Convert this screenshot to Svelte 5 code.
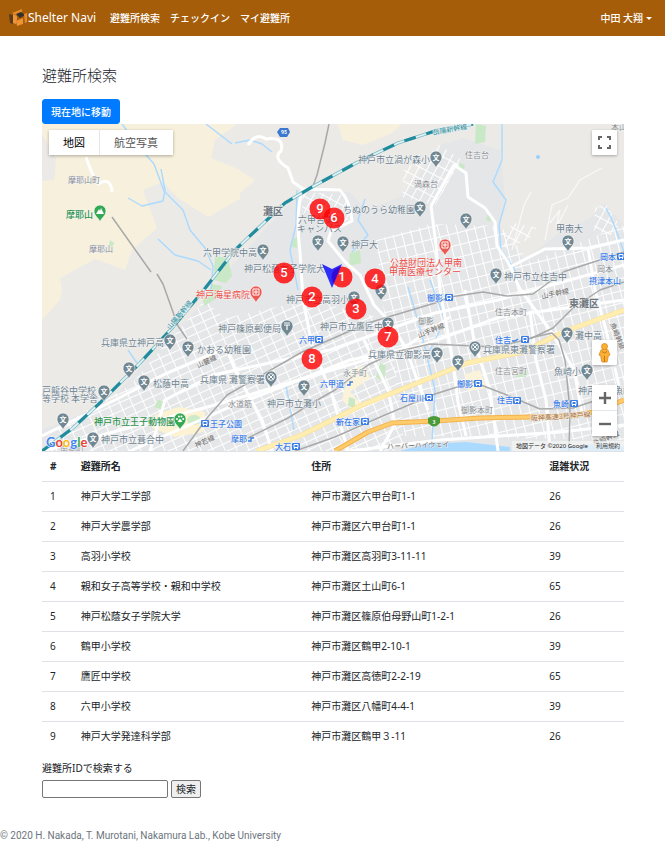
<script>
  const shelters = [
    { id: 1, name: '神戸大学工学部', address: '神戸市灘区六甲台町1-1', crowd: 26 },
    { id: 2, name: '神戸大学農学部', address: '神戸市灘区六甲台町1-1', crowd: 26 },
    { id: 3, name: '高羽小学校', address: '神戸市灘区高羽町3-11-11', crowd: 39 },
    { id: 4, name: '親和女子高等学校・親和中学校', address: '神戸市灘区土山町6-1', crowd: 65 },
    { id: 5, name: '神戸松蔭女子学院大学', address: '神戸市灘区篠原伯母野山町1-2-1', crowd: 26 },
    { id: 6, name: '鶴甲小学校', address: '神戸市灘区鶴甲2-10-1', crowd: 39 },
    { id: 7, name: '鷹匠中学校', address: '神戸市灘区高徳町2-2-19', crowd: 65 },
    { id: 8, name: '六甲小学校', address: '神戸市灘区八幡町4-4-1', crowd: 39 },
    { id: 9, name: '神戸大学発達科学部', address: '神戸市灘区鶴甲３-11', crowd: 26 }
  ];

  // [x, y, number] of each shelter on the map canvas
  const markers = [
    [342, 277, 1], [312, 297, 2], [356, 309, 3], [375, 279, 4], [284, 273, 5],
    [388, 337, 7], [312, 359, 8], [320, 209, 9], [334, 218, 6]
  ];

  const pins = [
    [170, 341], [188, 348], [129, 369], [144, 382], [104, 392], [63, 420], [93, 439],
    [263, 251], [318, 242], [343, 243], [420, 208], [436, 158], [381, 291], [354, 298],
    [388, 324], [304, 387], [466, 220], [568, 242], [496, 275], [437, 354], [458, 362],
    [567, 334], [587, 371]
  ];
  const special = [
    [100, 212, 'green', 'peak'], [180, 420, 'green', 'paw'], [256, 293, 'red', 'cross'],
    [445, 246, 'red', 'cross'], [287, 327, 'slate', 'post'], [271, 378, 'slate', 'police'],
    [475, 348, 'slate', 'police']
  ];

  // [x, baseline, text, class]
  const labels = [
    [68, 183, '摩耶山町', 'area'], [89, 252, '摩耶山', 'area'], [66, 218, '摩耶山', 'park'],
    [203, 256, '六甲学院中高', 'poi'], [263, 215, '灘区', 'ward'], [569, 307, '東灘区', 'ward'],
    [358, 163, '神戸市立渦が森小', 'poi'], [343, 213, 'ちぬのうら幼稚園', 'poi'],
    [298, 223, '六甲台第2', 'poi'], [297, 232, 'キャンパス', 'poi'], [351, 248, '神戸大', 'poi'],
    [244, 272, '神戸松蔭女子学院大', 'poi'], [414, 187, '渦森台', 'area'], [465, 158, '住吉台', 'area'],
    [611, 130, '本山', 'area'], [556, 232, '甲南大', 'poi'], [504, 280, '神戸市立住吉中', 'poi'],
    [390, 266, '公益財団法人甲南', 'medical'], [389, 275, '甲南医療センター', 'medical'],
    [196, 298, '神戸海星病院', 'medical'], [600, 260, '岡本', 'station'], [597, 272, '岡本', 'area'],
    [589, 284, '摂津本山', 'station'], [101, 346, '兵庫県立神戸高', 'poi'],
    [197, 353, 'かおる幼稚園', 'poi'], [218, 332, '神戸篠原郵便局', 'poi'],
    [286, 303, '神戸市立高羽小', 'poi'], [320, 330, '神戸市立鷹匠中', 'poi'],
    [368, 358, '兵庫県立御影高', 'poi'], [299, 343, '六甲', 'station'], [320, 387, '六甲道', 'station'],
    [343, 376, '永手町', 'area'], [153, 387, '松蔭中高', 'poi'], [200, 383, '兵庫県 灘警察署', 'poi'],
    [42, 394, '戸龍谷中学校', 'poi'], [42, 402, '等学校 本学舎', 'poi'], [94, 425, '神戸市立王子動物園', 'park'],
    [101, 443, '神戸市立葺合中', 'poi'], [210, 427, '王子公園', 'station'], [228, 407, '水道筋', 'area'],
    [267, 407, '神戸市立灘小', 'poi'], [231, 442, '摩耶', 'station'], [275, 450, '大石', 'station'],
    [336, 425, '新在家', 'station'], [400, 401, '石屋川', 'station'], [427, 301, '御影', 'station'],
    [418, 324, '御影', 'area'], [495, 315, '住吉本町', 'area'], [495, 343, '住吉', 'station'],
    [483, 353, '兵庫県東灘警察署', 'poi'], [495, 374, '住吉宮町', 'area'], [457, 387, '御影', 'station'],
    [497, 403, '住吉', 'station'], [461, 413, '御影本町', 'area'], [553, 407, '魚崎', 'station'],
    [554, 375, '魚崎小', 'poi'], [575, 339, '灘中高', 'poi'], [578, 394, '神戸市立魚崎', 'poi'],
    [60, 451, '南本町', 'area']
  ];

  const slanted = [
    [170, 330, -50, '山陽新幹線', 'express'], [433, 135, -10, '山陽新幹線', 'express'],
    [198, 368, -24, '山麓線', 'road'], [542, 299, -12, '山手幹線', 'road'],
    [419, 338, -22, '山手幹線', 'road'], [196, 448, -24, '神若線', 'road'],
    [531, 421, -4, '阪神高速3号神戸線', 'toll'], [387, 449, -2, 'ハーバーハイウェイ', 'road'],
    [610, 324, 68, '魚崎幹線', 'road'], [594, 446, -22, '魚崎幹線', 'road']
  ];

  const stops = [
    [315, 336], [445, 294], [617, 253], [361, 418], [425, 394], [292, 443],
    [521, 336], [474, 380], [513, 397], [570, 400], [201, 420]
  ];

  const rails = [
    'M112 217L151 272M157 274L163 284L178 326L187 339',
    'M329 124L325 143L317 175L313 186',
    'M183 451L207 418L227 395L302 352L368 323L435 303L450 297L483 292L507 296L533 294L563 272L624 252',
    'M248 438L288 418L312 403L335 390L368 365L395 352L430 344L497 347L532 338L553 328L573 308L600 290L624 282',
    'M530 338L552 333L559 340L565 360L568 390L570 410L569 451',
    'M183 451M295 451L335 437L385 415L435 394L473 382L507 395L540 409L573 408L600 399'
  ];

  const roads = [
    'M248 145Q256 132 266 139Q285 136 281 151Q272 158 288 168L293 182L303 189L340 190Q350 200 352 221L331 231L328 241L346 263L360 275L374 305L388 320L405 346L428 410',
    'M303 189Q295 210 300 252L303 300L312 345L332 395L348 451',
    'M42 436L115 400L165 374L226 348L236 372L262 420L272 451',
    'M150 451L165 400L213 375L330 350L435 313L498 300L624 265',
    'M130 451L230 407L350 360L420 346L500 317L624 300',
    'M431 206L454 165L466 173L468 197L485 208L495 222L497 246L508 262L520 289L552 333L574 370L582 413',
    'M431 206L436 245L440 290L451 350L458 402L466 436',
    'M42 451L222 403L402 349L450 317',
    'M380 451L395 424L388 390L364 340',
    'M465 290L474 340L490 390L498 451',
    'M510 267L545 249L588 248L624 240',
    'M588 248L595 290L606 330L620 390',
    'M350 451L440 440L560 432L624 425',
    'M530 311L536 360L546 400L550 451',
    'M86 157Q92 175 98 184Q111 176 112 192'
  ];

  const streams = [
    'M122 124L140 148L154 164L164 191L183 210L190 230L205 248L213 266L211 290',
    'M128 198L142 206L163 201M163 201L165 190L161 169',
    'M158 239L175 255L198 261L211 270',
    'M235 143L250 140L262 144L272 152',
    'M502 124L502 160L493 182L506 200L499 225L501 250L514 268L520 290',
    'M624 252L613 222L606 208M206 124L232 144',
    'M365 199L358 220L368 235L352 252',
    'M297 190L296 225L290 250L298 290',
    'M128 350L137 363M430 280L445 320L430 350',
    'M408 287L422 335L435 390L432 442M286 385L294 430'
  ];

  const greens = [
    '215,256 228,258 232,276 226,283 213,280', '350,253 360,250 361,263 349,266',
    '212,284 222,286 219,297 204,306 203,300', '476,124 486,126 485,142 475,144',
    '380,363 386,366 384,382 376,377', '292,240 298,236 297,248 290,246',
    '158,400 166,402 162,410 154,407', '349,397 355,399 355,408 348,406',
    '521,370 528,371 526,377 515,377', '460,163 465,165 463,172 458,168',
    '488,214 492,216 490,222 486,220', '110,240 114,243 112,248 109,245'
  ];

  let shelterId = $state('');
  let mapType = $state('map');
</script>

<header class="navbar">
  <a class="brand" href="/">
    <svg width="19" height="18" viewBox="0 0 19 18" aria-hidden="true">
      <path d="M0 5L4 6V15L1 14Z" fill="#5a3c1c" />
      <path d="M3 4L13 0V3L7 6Z" fill="#e58a2c" />
      <path d="M4 5L8 7V10L7 15L4 14Z" fill="#ee9336" />
      <path d="M7 5L12 3L16 6L11 9Z" fill="#33302c" />
      <path d="M7 12L14 9V15L8 17Z" fill="#ee9336" />
      <path d="M15 5L18 4V13L16 14Z" fill="#e58a2c" />
    </svg>
    <span>Shelter Navi</span>
  </a>
  <nav>
    <a href="#search">避難所検索</a>
    <a href="#checkin">チェックイン</a>
    <a href="#mine">マイ避難所</a>
  </nav>
  <button class="user" type="button">中田 大翔<span class="caret"></span></button>
</header>

<main>
  <h1>避難所検索</h1>
  <button class="primary" type="button">現在地に移動</button>

  <section class="map" aria-label="避難所の地図">
    <svg class="canvas" viewBox="42 124 582 327" preserveAspectRatio="xMidYMid slice">
      <defs>
        <pattern id="grid-a" width="11" height="8" patternUnits="userSpaceOnUse" patternTransform="rotate(-24)">
          <path d="M0 0H11M0 0V8" stroke="#fff" stroke-width="2" fill="none" />
        </pattern>
        <pattern id="grid-b" width="9" height="12" patternUnits="userSpaceOnUse" patternTransform="rotate(-14)">
          <path d="M0 0H9M0 0V12" stroke="#fff" stroke-width="2" fill="none" />
        </pattern>
        <pattern id="grid-c" width="8" height="10" patternUnits="userSpaceOnUse" patternTransform="rotate(28)">
          <path d="M0 0H8M0 0V10" stroke="#fff" stroke-width="2" fill="none" />
        </pattern>
      </defs>

      <rect x="42" y="124" width="582" height="327" fill="#ebeae7" />
      <polygon points="42,124 237,124 215,140 211,158 240,170 240,199 208,217 178,198 163,182 143,190 157,228 132,250 125,270 95,259 60,278 62,290 60,300 42,320 42,181 54,180 56,158 42,134" fill="#f7f0dc" />
      <polygon points="235,168 255,180 235,198" fill="#f7f0dc" />
      <polygon points="338,124 343,140 363,145 392,133 402,124" fill="#f7f0dc" />
      <polygon points="42,430 110,402 150,356 180,326 208,298 235,262 285,208 303,188 350,192 366,210 400,197 426,165 440,145 464,138 500,150 505,196 500,226 524,260 560,232 590,218 604,203 624,225 624,451 42,451" fill="#e5e6e8" />
      <polygon points="62,425 130,385 165,345 205,300 225,318 310,300 390,320 405,451 42,451" fill="url(#grid-a)" />
      <polygon points="376,240 430,224 500,226 530,262 624,225 624,440 405,436 385,320" fill="url(#grid-b)" />
      <polygon points="303,192 345,195 352,218 330,228 302,212" fill="url(#grid-c)" />
      <polygon points="404,170 440,145 462,160 435,205 402,197" fill="url(#grid-c)" />
      <polygon points="595,208 605,203 620,225 612,235 594,231" fill="url(#grid-c)" />
      <polygon points="502,235 514,223 537,228 528,240 505,248" fill="url(#grid-c)" />
      <polygon points="155,415 178,407 205,412 203,432 175,437 152,428" fill="#fdf3d2" />
      <polygon points="350,370 364,366 370,378 350,392 362,404 354,412 342,400" fill="#fbf3da" />
      <polygon points="465,374 480,370 486,388 468,391" fill="#fbf3da" />
      <ellipse cx="194" cy="420" rx="7" ry="5" fill="#cdebc9" />
      {#each greens as points}
        <polygon {points} fill="#c9e8c5" />
      {/each}
      <g fill="none" stroke="#aadaff" stroke-width="1.4" stroke-linejoin="round">
        {#each streams as d}<path {d} />{/each}
      </g>
      <path d="M400 451L425 444L466 442L510 447V451ZM560 447L600 444L624 447V451H560Z" fill="#aadaff" />
      <circle cx="538" cy="157" r="2" fill="#9cd0fb" />
      <g fill="none" stroke="#fff" stroke-width="3" stroke-linejoin="round">
        {#each roads as d}<path {d} />{/each}
      </g>
      <path d="M512 250L524 205L531 192M545 240L552 205L568 198L580 180L602 168M550 223L560 210L556 228L568 205" fill="none" stroke="#f8f8f8" stroke-width="1.3" />
      <g fill="none" stroke-linejoin="round">
        <path d="M257 451L302 435L362 405L435 376L467 363L523 352L563 332L624 310" stroke="#f6dc92" stroke-width="5" />
        <path d="M257 451L302 435L362 405L435 376L467 363L523 352L563 332L624 310" stroke="#ffeeb0" stroke-width="4" />
        <path d="M335 451L368 432L392 423L435 421L480 418L570 416L593 412L624 400" stroke="#f3b34c" stroke-width="5" />
        <path d="M335 451L368 432L392 423L435 421L480 418L570 416L593 412L624 400" stroke="#ffcb6b" stroke-width="3" />
        <g stroke="#a9a9a9" stroke-width="1.5">
          {#each rails as d}<path {d} />{/each}
        </g>
        <path d="M42 451L73 428L103 400L140 363L173 327L203 291L235 250L285 203L312 187L358 162L398 143L435 131L473 124" stroke="#7fbcc4" stroke-width="3.4" />
        <path d="M42 451L73 428L103 400L140 363L173 327L203 291L235 250L285 203L312 187L358 162L398 143L435 131L473 124" stroke="#e2f2f4" stroke-width="1.8" />
        <path d="M42 451L73 428L103 400L140 363L173 327L203 291L235 250L285 203L312 187L358 162L398 143L435 131L473 124" stroke="#208b9c" stroke-width="3" stroke-dasharray="12 11" />
      </g>

      <path d="M280 128L288 128L290 132L287 137H280L277 132Z" fill="#3b78d0" />
      <text class="shield" x="284" y="134">95</text>
      <path d="M428 418Q434 414 440 418V423Q434 430 428 423Z" fill="#4d9a3b" />
      <text class="shield" x="434" y="424">3</text>

      {#each stops as [x, y]}
        <g transform="translate({x} {y})">
          <rect width="8" height="7" rx="1" fill="#3b7de9" />
          <path d="M2 1.5H6V4.5H2ZM2 6L3 5M6 6L5 5" fill="none" stroke="#fff" stroke-width="1" />
        </g>
      {/each}
      {#each labels as [x, y, text, kind]}
        <text class={kind} {x} {y}>{text}</text>
      {/each}
      {#each slanted as [x, y, angle, text, kind]}
        <text class={kind} transform="translate({x} {y}) rotate({angle})">{text}</text>
      {/each}
      <path d="M347 385H350V382H353M512 341H515L518 339M248 441H251V438H254" fill="none" stroke="#3b7de9" stroke-width="1.4" />

      {#each pins as [x, y]}
        <g transform="translate({x} {y})">
          <path class="pin slate" d="M0 10C-1 6-6 4-6-1A6 6 0 1 1 6-1C6 4 1 6 0 10Z" />
          <text class="glyph" x="0" y="2">文</text>
        </g>
      {/each}
      {#each special as [x, y, tone, kind]}
        <g transform="translate({x} {y})">
          <path class="pin {tone}" d="M0 10C-1 6-6 4-6-1A6 6 0 1 1 6-1C6 4 1 6 0 10Z" />
          {#if kind === 'peak'}
            <path d="M-4 2L-1-3L0-1L1-4L4 2Z" fill="#fff" />
          {:else if kind === 'paw'}
            <g fill="#fff"><circle cx="-3" cy="-1" r="1" /><circle cx="-1" cy="-3.4" r="1" /><circle cx="1.5" cy="-3.4" r="1" /><circle cx="3.2" cy="-1" r="1" /><path d="M0-1.5L2.4 1.6Q0 3-2.4 1.6Z" /></g>
          {:else if kind === 'cross'}
            <path d="M-3-4H3V2H-3ZM0-3V1M-2-1H2" fill="none" stroke="#fff" stroke-width="1" />
          {:else if kind === 'post'}
            <path d="M-3-4H3M-3-2H3M0-2V3" fill="none" stroke="#fff" stroke-width="1.2" />
          {:else}
            <circle cy="-1" r="3.4" fill="none" stroke="#fff" /><path d="M-2-3L2 1M2-3L-2 1" stroke="#fff" />
          {/if}
        </g>
      {/each}

      {#each markers as [x, y, n]}
        <circle cx={x} cy={y} r="10.5" fill="#f00" fill-opacity=".8" />
        <text class="number" {x} y={y + 4}>{n}</text>
      {/each}
      <path d="M322 264L332 269L342 264L332 288Z" fill="#00f" fill-opacity=".8" />

      <text class="google" x="46" y="447"><tspan fill="#4285f4">G</tspan><tspan fill="#ea4335">o</tspan><tspan fill="#fbbc05">o</tspan><tspan fill="#4285f4">g</tspan><tspan fill="#34a853">l</tspan><tspan fill="#ea4335">e</tspan></text>
    </svg>

    <div class="types">
      <button type="button" class:active={mapType === 'map'} onclick={() => (mapType = 'map')}>地図</button>
      <button type="button" class:active={mapType === 'photo'} onclick={() => (mapType = 'photo')}>航空写真</button>
    </div>
    <button class="tool fullscreen" type="button" aria-label="全画面表示">
      <svg width="13" height="13" viewBox="0 0 13 13"><path d="M1 4V1H4M9 1H12V4M12 9V12H9M4 12H1V9" fill="none" stroke="#666" stroke-width="2" /></svg>
    </button>
    <div class="side">
      <button class="tool" type="button" aria-label="ストリートビュー">
        <svg width="13" height="20" viewBox="0 0 13 20">
          <path d="M3 7Q6.500 5 10 7L12 12L10 13V15L9 19H4L3 15V13L1 12Z" fill="#fbb034" stroke="#d9871b" stroke-width=".8" />
          <circle cx="6.500" cy="3.500" r="3" fill="#fbb034" stroke="#d9871b" stroke-width=".8" />
          <path d="M6.500 13V19M4 8.500L6.500 10L9 8.500" fill="none" stroke="#c4751a" stroke-width="1" />
        </svg>
      </button>
      <div class="zoom">
        <button type="button" aria-label="拡大"><svg width="12" height="12" viewBox="0 0 12 12"><path d="M6 0V12M0 6H12" stroke="#666" stroke-width="2.400" /></svg></button>
        <button type="button" aria-label="縮小"><svg width="12" height="12" viewBox="0 0 12 12"><path d="M0 6H12" stroke="#666" stroke-width="2.400" /></svg></button>
      </div>
    </div>
    <div class="credits"><span>地図データ ©2020 Google</span><a href="#terms">利用規約</a></div>
  </section>

  <table>
    <colgroup><col class="c-id" /><col class="c-name" /><col class="c-address" /><col /></colgroup>
    <thead>
      <tr><th scope="col">#</th><th scope="col">避難所名</th><th scope="col">住所</th><th scope="col">混雑状況</th></tr>
    </thead>
    <tbody>
      {#each shelters as shelter (shelter.id)}
        <tr><td>{shelter.id}</td><td>{shelter.name}</td><td>{shelter.address}</td><td>{shelter.crowd}</td></tr>
      {/each}
    </tbody>
  </table>

  <form onsubmit={(event) => event.preventDefault()}>
    <label for="shelter-id">避難所IDで検索する</label>
    <div class="field">
      <input id="shelter-id" type="text" bind:value={shelterId} />
      <button type="submit">検索</button>
    </div>
  </form>
</main>

<footer>© 2020 H. Nakada, T. Murotani, Nakamura Lab., Kobe University</footer>

<style>
  :global(body) {
    margin: 0;
    background: #fff;
    color: #212529;
    font: 10px/14px 'Noto Sans', 'Noto Sans CJK JP', sans-serif;
  }
  button, input { font: inherit; color: inherit; box-sizing: border-box; }
  button { cursor: pointer; }

  .navbar {
    display: flex;
    align-items: center;
    height: 36px;
    padding: 0 13px 0 9px;
    background: #a55d09;
    color: #fff;
    font-weight: 500;
  }
  .navbar a { color: inherit; text-decoration: none; }
  .brand { display: flex; align-items: center; font-size: 12px; line-height: 18px; font-weight: 400; }
  nav { display: flex; gap: 10px; margin-left: 14px; }
  .user { display: flex; align-items: center; gap: 3px; margin-left: auto; padding: 0; border: 0; background: none; }
  .caret { border: 3px solid transparent; border-top-color: #fff; border-bottom: 0; }

  main { padding: 30px 41px 0 42px; }
  h1 { margin: 0 0 14px; font-size: 15px; line-height: 19px; font-weight: 300; }
  .primary {
    display: block;
    height: 25px;
    padding: 0 8px;
    border: 1px solid #007bff;
    border-radius: 3px;
    background: #007bff;
    color: #fff;
    font-weight: 500;
  }

  .map { position: relative; height: 327px; overflow: hidden; }
  .canvas { display: block; width: 100%; height: 100%; font-family: 'Noto Sans CJK JP', sans-serif; }
  .canvas text { paint-order: stroke; stroke: #f5f5f5; stroke-width: 1px; stroke-linejoin: round; }
  .canvas .poi { font-size: 9px; fill: #6d8290; }
  .canvas .area { font-size: 8px; fill: #8b8f94; }
  .canvas .ward { font-size: 10px; font-weight: 700; fill: #6e7780; }
  .canvas .park { font-size: 9px; font-weight: 500; fill: #2c934d; }
  .canvas .medical { font-size: 9px; fill: #ea4b44; }
  .canvas .station { font-size: 8px; font-weight: 500; fill: #3b7de9; }
  .canvas .road { font-size: 7px; fill: #666; }
  .canvas .toll { font-size: 7px; fill: #a4672a; }
  .canvas .express { font-size: 7px; fill: #208b9c; }
  .canvas .glyph { font-size: 7px; font-weight: 700; text-anchor: middle; fill: #fff; stroke: none; }
  .canvas .shield { font-size: 5px; font-weight: 700; text-anchor: middle; fill: #fff; stroke: none; }
  .canvas .number { font: 500 13px Roboto, sans-serif; text-anchor: middle; fill: #fff; stroke: none; }
  .canvas .google { font: 700 13px Lato, sans-serif; stroke: #fff; stroke-width: 1px; }
  .pin { stroke: #fff; stroke-width: .6px; }
  .slate { fill: #718792; }
  .green { fill: #34a853; }
  .red { fill: #ea5a52; }

  .map button { padding: 0; border: 0; background: #fff; color: #565656; }
  .types { position: absolute; top: 6px; left: 7px; display: flex; box-shadow: 0 1px 3px rgba(0, 0, 0, .3); font-size: 11px; }
  .map .types button { height: 25px; padding: 0 14px; }
  .map .types button + button { padding: 0 15px 0 14px; border-left: 1px solid #e6e6e6; }
  .map .types .active { color: #000; }
  .tool, .zoom button { display: grid; place-items: center; width: 25px; height: 25px; }
  .tool, .zoom { border-radius: 1px; box-shadow: 0 1px 3px rgba(0, 0, 0, .3); }
  .fullscreen { position: absolute; top: 6px; right: 7px; }
  .side { position: absolute; right: 7px; bottom: 15px; display: grid; gap: 20px; }
  .zoom { background: #fff; }
  .map .zoom button + button { border-top: 1px solid #e6e6e6; height: 26px; }
  .credits {
    position: absolute;
    right: 0;
    bottom: 0;
    display: flex;
    gap: 8px;
    padding: 0 4px;
    background: rgba(245, 245, 245, .7);
    color: #222;
    font-size: 6px;
    line-height: 10px;
  }
  .credits a { color: #444; text-decoration: none; }

  table { width: 100%; table-layout: fixed; border-collapse: collapse; }
  .c-id { width: 5.3%; }
  .c-name { width: 39.6%; }
  .c-address { width: 40.9%; }
  th, td { height: 14px; padding: 7px 8px 8px; border-top: 1px solid #dee2e6; text-align: left; vertical-align: top; }
  th { font-weight: 700; }

  form { margin-top: 10px; }
  label { display: block; margin-bottom: 5px; }
  .field { display: flex; gap: 3px; }
  .field input { width: 126px; height: 18px; padding: 1px 2px; border: 1px solid #767676; border-radius: 2px; }
  .field button { height: 18px; padding: 0 4px; border: 1px solid #767676; border-radius: 2px; background: #efefef; line-height: 14px; }
  footer { margin-top: 31px; color: #6c757d; font-family: Roboto, 'Noto Sans CJK JP', sans-serif; }
</style>
